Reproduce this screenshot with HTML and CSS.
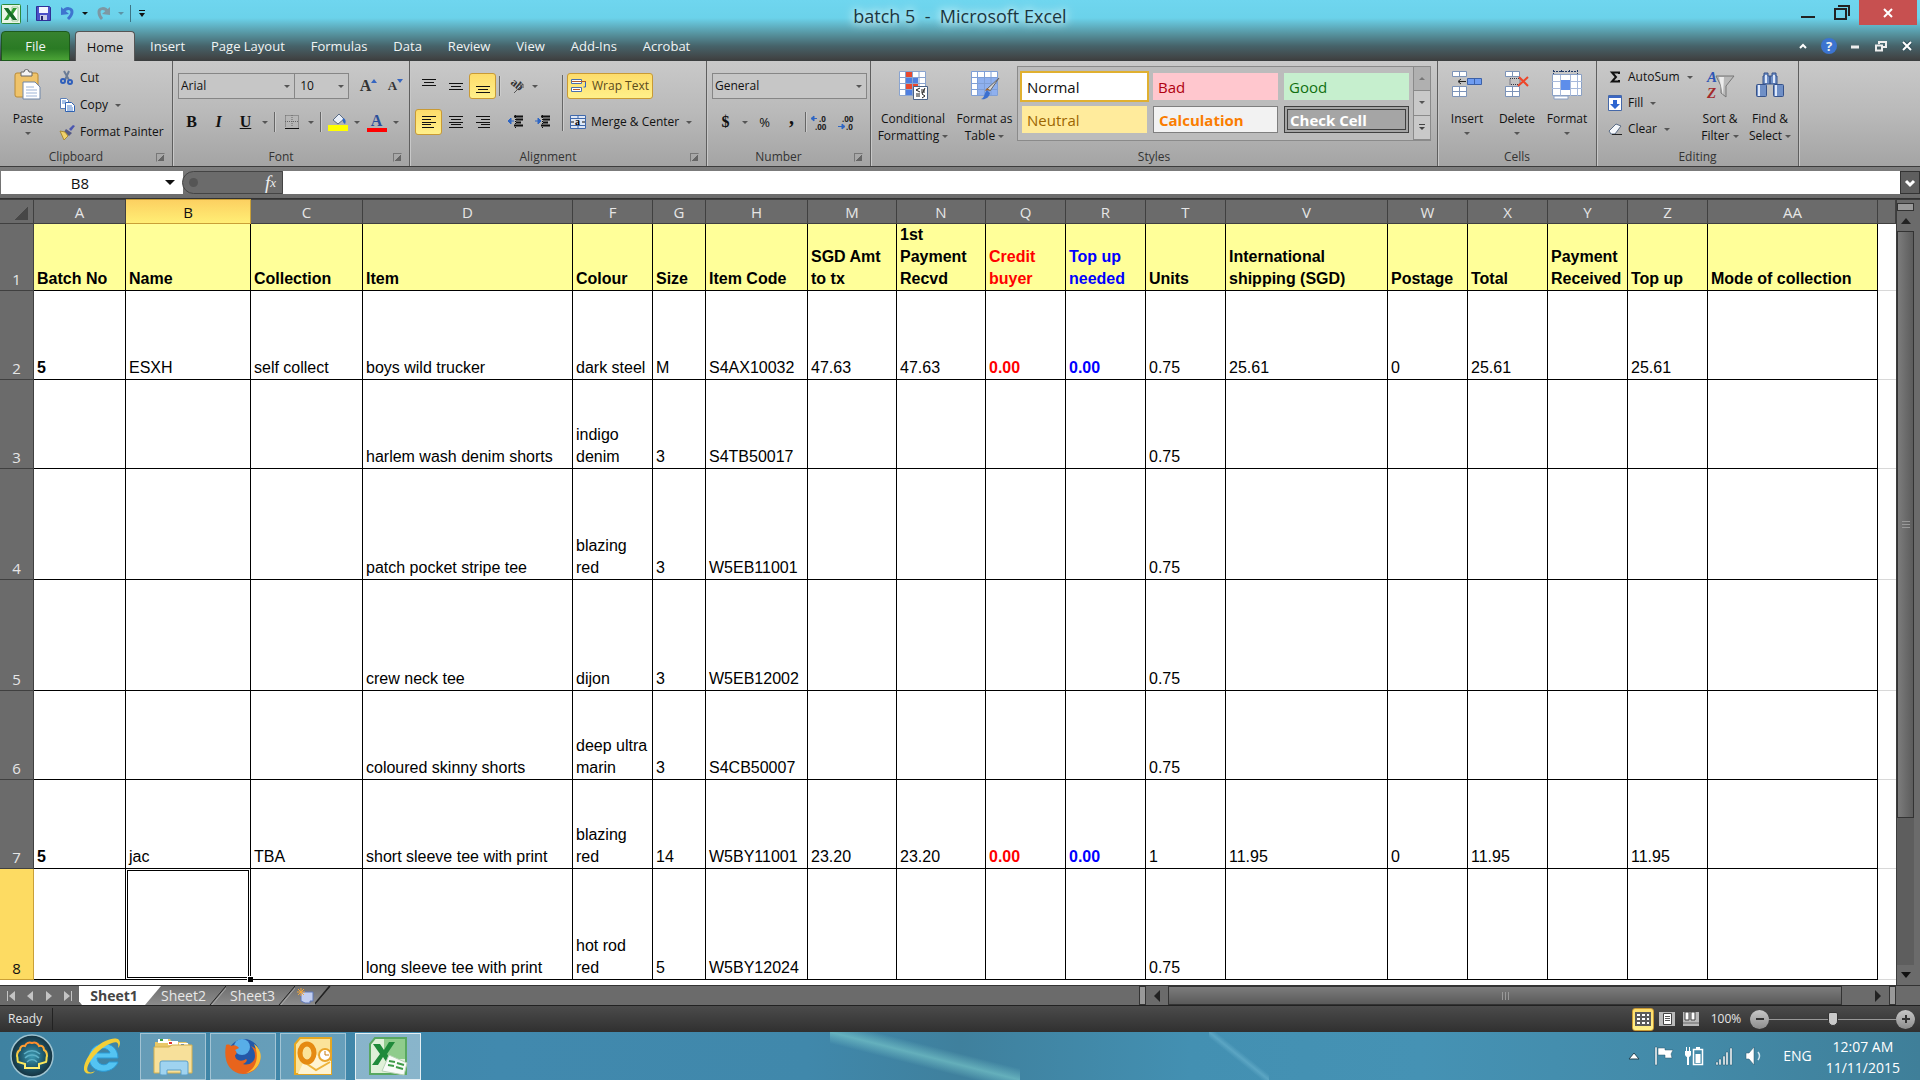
FILE: index.html
```html
<!DOCTYPE html>
<html lang="en">
<head>
<meta charset="utf-8">
<title>batch 5 - Microsoft Excel</title>
<link rel="stylesheet" href="styles.css">
</head>
<body>
<header class="chrome">
  <div class="titlebar">
    <div class="quick">
      <svg width="20" height="20" viewBox="0 0 20 20"><rect x=".5" y=".5" width="19" height="19" rx="1" fill="#e9f5e6" stroke="#2c8a3c"/><path d="M11 3h6v14h-6z" fill="#fff" stroke="#9cc79a"/><path d="M3 4h4l3 4 2-4h4l-4 6 4 6h-4l-3-4-2 4H3l4-6z" fill="#2f9a32"/><path d="M3 4h4l9 12h-4z" fill="#196b2a"/></svg>
      <i class="tick"></i>
      <button class="ico" aria-label="Save"><svg width="15" height="15" viewBox="0 0 15 15"><path d="M.5.5h13l1 1v13H.5z" fill="#4b50c8" stroke="#2f2f96"/><path d="M3 1h9v6H3z" fill="#f4f6ff"/><path d="M4 9h7v5H4z" fill="#c9cde8"/><path d="M5 10h2v4H5z" fill="#26266e"/></svg></button>
      <button class="ico" aria-label="Undo"><svg width="15" height="15" viewBox="0 0 15 15"><path d="M3 6c3-5 9-4 9 0 0 3-2 5-4 7" fill="none" stroke="#3e74cf" stroke-width="3"/><path d="M1 1l0 8 8-1z" fill="#3e74cf"/></svg></button>
      <i class="caret dark"></i>
      <button class="ico" aria-label="Redo"><svg width="15" height="15" viewBox="0 0 15 15"><path d="M12 6C9 1 3 2 3 6c0 3 1 5 3 7" fill="none" stroke="#7d98a3" stroke-width="3"/><path d="M14 1l0 8-8-1z" fill="#7d98a3"/></svg></button>
      <i class="caret pale"></i>
      <i class="tick"></i>
      <button class="ico" aria-label="Customize Quick Access Toolbar"><svg width="8" height="7" viewBox="0 0 8 7"><path d="M1 .500h6" stroke="#111"/><path d="M1 3h6L4 7z" fill="#111"/></svg></button>
    </div>
    <h1>batch 5 &nbsp;- &nbsp;Microsoft Excel</h1>
    <div class="winctl">
      <button aria-label="Minimize"><svg width="16" height="16" viewBox="0 0 16 16"><path d="M1 12h14" stroke="#222" stroke-width="2"/></svg></button>
      <button aria-label="Restore Down"><svg width="16" height="16" viewBox="0 0 16 16"><path d="M1 4h11v10H1zM4 1h11v10" fill="none" stroke="#222" stroke-width="2"/></svg></button>
      <button class="close" aria-label="Close"><svg width="12" height="12" viewBox="0 0 12 12"><path d="M2 2l8 8M10 2l-8 8" stroke="#fff" stroke-width="2"/></svg></button>
    </div>
  </div>
  <nav class="tabs">
    <button class="file">File</button>
    <button class="on">Home</button>
    <button>Insert</button><button>Page Layout</button><button>Formulas</button><button>Data</button><button>Review</button><button>View</button><button>Add-Ins</button><button>Acrobat</button>
    <div class="docctl">
      <button aria-label="Minimize the Ribbon"><svg width="12" height="12" viewBox="0 0 12 12"><path d="M3 8l3-3 3 3" fill="none" stroke="#fff" stroke-width="2"/></svg></button>
      <button class="help" aria-label="Help">?</button>
      <button aria-label="Minimize window"><svg width="12" height="12" viewBox="0 0 12 12"><path d="M2 7h8" stroke="#eee" stroke-width="3"/></svg></button>
      <button aria-label="Restore window"><svg width="12" height="12" viewBox="0 0 12 12"><path d="M4 4V2h7v5H8M1 5.500h6v5H1z" fill="none" stroke="#eee" stroke-width="2"/></svg></button>
      <button aria-label="Close window"><svg width="12" height="12" viewBox="0 0 12 12"><path d="M2 2l8 8M10 2l-8 8" stroke="#33525c" stroke-width="4"/><path d="M2 2l8 8M10 2l-8 8" stroke="#fff" stroke-width="2"/></svg></button>
    </div>
  </nav>
</header>

<section class="ribbon">
  <div class="group clipboard">
    <div class="body">
      <button class="big"><svg width="28" height="30" viewBox="0 0 28 30"><rect x="1" y="3" width="23" height="24" rx="2" fill="#efc36a" stroke="#b98a35"/><path d="M7 2h3a2 2 0 0 1 5 0h3v4H7z" fill="#f4f4f4" stroke="#666"/><path d="M9 12h12l5 5v12H9z" fill="#fff" stroke="#6f86a8"/><path d="M12 17h8M12 20h11M12 23h11M12 26h11" stroke="#9db4d6"/></svg><span>Paste</span><i class="caret"></i></button>
      <div class="stack">
        <button class="small"><svg width="16" height="16" viewBox="0 0 16 16"><path d="M5 1l5 9M10 1L6 10" stroke="#6a7c96" stroke-width="2"/><circle cx="4" cy="11" r="2" fill="none" stroke="#2f5fbb" stroke-width="2"/><circle cx="11" cy="12" r="2" fill="none" stroke="#2f5fbb" stroke-width="2"/></svg>Cut</button>
        <button class="small"><svg width="16" height="16" viewBox="0 0 16 16"><path d="M1.500 1.500h6l2 2v8h-8z" fill="#fff" stroke="#5b7fb8"/><path d="M6.500 5.500h6l3 3v6h-9z" fill="#fff" stroke="#2f62b2"/><path d="M3 4h4M3 6h3M8 9h5M8 11h6M8 13h6" stroke="#4f83cf"/></svg>Copy <i class="caret"></i></button>
        <button class="small"><svg width="16" height="16" viewBox="0 0 16 16"><path d="M10 5l4-4 2 1-4 5z" fill="#4a56b0"/><path d="M7 5l6 4-3 3-5-4z" fill="#555a86"/><path d="M1 7l5 1 3 4-4 4z" fill="#f1d26b" stroke="#a98a35"/></svg>Format Painter</button>
      </div>
    </div>
    <div class="foot"><span>Clipboard</span><button class="launch" aria-label="Clipboard options"></button></div>
  </div>

  <div class="group font">
    <div class="rows">
      <div class="row">
        <label class="combo face"><select aria-label="Font"><option>Arial</option></select></label><label class="combo size"><select aria-label="Font Size"><option>10</option></select></label>
        <button class="tool serif big-a" aria-label="Grow Font">A<svg width="6" height="4" viewBox="0 0 6 4"><path d="M0 4l3-4 3 4z" fill="#3565c0"/></svg></button>
        <button class="tool serif small-a" aria-label="Shrink Font">A<svg width="6" height="4" viewBox="0 0 6 4"><path d="M0 0l3 4 3-4z" fill="#3565c0"/></svg></button>
      </div>
      <div class="row">
        <button class="tool serif">B</button><button class="tool serif it">I</button><button class="tool serif un">U</button><i class="caret"></i><i class="vr"></i>
        <button class="tool" aria-label="Borders"><svg width="14" height="14" viewBox="0 0 14 14"><path d="M.5.5h13v12M.5.500v12M7 0v12M0 6.500h14" fill="none" stroke="#666" stroke-dasharray="1 1"/><path d="M0 13.500h14" stroke="#111"/></svg></button><i class="caret"></i><i class="vr"></i>
        <button class="tool" aria-label="Fill Color"><svg width="20" height="18" viewBox="0 0 20 18"><path d="M5 7l6-6 5 5-6 5z" fill="#e9eff8" stroke="#5a6c86"/><path d="M15 5c3 1 3 4 2 6-2-1-3-4-2-6z" fill="#2f66c4"/><path d="M0 12h20v6H0z" fill="#ff0"/></svg></button><i class="caret"></i>
        <button class="tool" aria-label="Font Color"><span class="serif fc">A</span></button><i class="caret"></i>
      </div>
    </div>
    <div class="foot"><span>Font</span><button class="launch" aria-label="Font options"></button></div>
  </div>

  <div class="group align">
    <div class="body">
      <div class="rows">
        <div class="row">
          <button class="tool" aria-label="Top Align"><svg width="14" height="18" viewBox="0 0 14 18"><path d="M0 2.500h14M2 5.500h10M0 8.500h14" stroke="#111"/></svg></button>
          <button class="tool" aria-label="Middle Align"><svg width="14" height="18" viewBox="0 0 14 18"><path d="M0 6.500h14M2 9.500h10M0 12.500h14" stroke="#111"/></svg></button>
          <button class="tool hot" aria-label="Bottom Align"><svg width="14" height="18" viewBox="0 0 14 18"><path d="M0 9.500h14M2 12.500h10M0 15.500h14" stroke="#111"/></svg></button><i class="vr"></i>
          <button class="tool" aria-label="Orientation"><svg width="16" height="16" viewBox="0 0 16 16"><text x="0" y="8" font-size="12" font-weight="700" transform="rotate(40 4 8)" fill="#333">ab</text><path d="M5 15l9-9M10 6h4v4" fill="none" stroke="#555"/></svg></button><i class="caret"></i>
        </div>
        <div class="row">
          <button class="tool hot" aria-label="Align Text Left"><svg width="14" height="12" viewBox="0 0 14 12"><path d="M0 .500h14M0 3.500h9M0 6.500h14M0 8.500h9M0 11.500h12" stroke="#111"/></svg></button>
          <button class="tool" aria-label="Center"><svg width="14" height="12" viewBox="0 0 14 12"><path d="M0 .500h14M2 3.500h10M0 6.500h14M2 8.500h10M0 11.500h14" stroke="#111"/></svg></button>
          <button class="tool" aria-label="Align Text Right"><svg width="14" height="12" viewBox="0 0 14 12"><path d="M0 .500h14M5 3.500h9M0 6.500h14M5 8.500h9M2 11.500h12" stroke="#111"/></svg></button><i class="vr"></i>
          <button class="tool" aria-label="Decrease Indent"><svg width="16" height="14" viewBox="0 0 16 14"><path d="M6 1.500h9M8 4.500h7M8 7.500h5M6 10.500h9" stroke="#111" stroke-width="2"/><path d="M7.500 0v14" stroke="#111" stroke-dasharray="1 1"/><path d="M6 6H1m2-3L0 6l3 3z" stroke="#2f66c4" fill="#2f66c4"/></svg></button>
          <button class="tool" aria-label="Increase Indent"><svg width="16" height="14" viewBox="0 0 16 14"><path d="M6 1.500h9M8 4.500h7M8 7.500h5M6 10.500h9" stroke="#111" stroke-width="2"/><path d="M7.500 0v14" stroke="#111" stroke-dasharray="1 1"/><path d="M0 6h4M3 3l3 3-3 3z" stroke="#2f66c4" fill="#2f66c4"/></svg></button>
        </div>
      </div>
      <i class="vr tall"></i>
      <div class="rows wrapcol">
        <div class="row"><button class="small hot"><svg width="16" height="16" viewBox="0 0 16 16"><path d="M.5 1.500h10v4H.5zM.5 9.500h10v4H.5z" fill="#fff" stroke="#4a6fae"/><path d="M1 3.500h14M2 11.500h7" stroke="#b25a2a"/><path d="M14.500 4v5h-2" fill="none" stroke="#2f66c4"/></svg>Wrap Text</button></div>
        <div class="row"><button class="small"><svg width="16" height="14" viewBox="0 0 16 14"><path d="M.5.500h15v13H.5z" fill="#dfe8f6" stroke="#3f68ab"/><path d="M8 0v4M8 10v4M0 3.500h16M0 10.500h16" stroke="#3f68ab"/><path d="M1 7h3M12 7h3" stroke="#111"/><text x="5" y="10" font-size="10" font-weight="700">a</text></svg>Merge &amp; Center <i class="caret"></i></button></div>
      </div>
    </div>
    <div class="foot"><span>Alignment</span><button class="launch" aria-label="Alignment options"></button></div>
  </div>

  <div class="group number">
    <div class="rows">
      <div class="row"><label class="combo fmt"><select aria-label="Number Format"><option>General</option></select></label></div>
      <div class="row">
        <button class="tool serif">$</button><i class="caret"></i><button class="tool pct">%</button><button class="tool serif comma">,</button><i class="vr"></i>
        <button class="tool" aria-label="Increase Decimal"><svg width="17" height="15" viewBox="0 0 17 15"><text x="8" y="7" class="dec">.0</text><text x="4" y="15" class="dec">.00</text><path d="M1 3.500h5M3 1L0 3.500 3 6z" stroke="#2f66c4" fill="#2f66c4"/></svg></button>
        <button class="tool" aria-label="Decrease Decimal"><svg width="17" height="15" viewBox="0 0 17 15"><text x="4" y="7" class="dec">.00</text><text x="8" y="15" class="dec">.0</text><path d="M0 11.500h5M4 9l3 2.500L4 14z" stroke="#2f66c4" fill="#2f66c4"/></svg></button>
      </div>
    </div>
    <div class="foot"><span>Number</span><button class="launch" aria-label="Number options"></button></div>
  </div>

  <div class="group styles">
    <div class="body">
      <button class="big cf"><svg width="30" height="30" viewBox="0 0 30 30"><path d="M1.500 1.500h26v24h-26z" fill="#fff"/><path d="M8 1h6v6H8zM8 13h12v6H8z" fill="#e8492f"/><path d="M8 7h12v6H8zM8 19h6v6H8z" fill="#4f7fe0"/><path d="M1.500 1.500h26v24h-26zM7.500 1v24M14.500 1v24M21 1v24M1 7.500h26M1 13.500h26M1 19.500h26" fill="none" stroke="#8aa4cf"/><path d="M15.500 16.500h14v13h-14z" fill="#fff" stroke="#4a6286"/><path d="M22 18l-4 2 4 2M18 24h4M18 26h4M23 20h4M23 22h4M24 24l3 2-3 2M27 18l-3 6" fill="none" stroke="#222"/></svg><span>Conditional<br>Formatting <i class="caret"></i></span></button>
      <button class="big ft"><svg width="30" height="30" viewBox="0 0 30 30"><path d="M1.500 1.500h26v24h-26z" fill="#fff"/><path d="M8 7h20v18H8z" fill="#8fb0ee"/><path d="M1.500 1.500h26v24h-26zM7.500 1v24M14.500 1v24M21 1v24M1 7.500h26M1 13.500h26M1 19.500h26" fill="none" stroke="#7f9fd6"/><path d="M29 8l-9 13-3-2z" fill="#d8d8d8" stroke="#666"/><path d="M20 20l-3-2-2 3z" fill="#a0622a"/><path d="M11 29c4-1 3-6 6-9l3 3c-1 5-5 7-9 6z" fill="#3a6fd0"/></svg><span>Format as<br>Table <i class="caret"></i></span></button>
      <div class="gallery">
        <div class="swatches">
          <button class="sw normal">Normal</button><button class="sw bad">Bad</button><button class="sw good">Good</button>
          <button class="sw neutral">Neutral</button><button class="sw calc">Calculation</button><button class="sw check">Check Cell</button>
        </div>
        <div class="spin">
          <button class="off" aria-label="Row up"><i class="caret up"></i></button>
          <button aria-label="Row down"><i class="caret"></i></button>
          <button aria-label="More styles"><svg width="8" height="7" viewBox="0 0 8 7"><path d="M1 .500h6" stroke="#444"/><path d="M1 3h6L4 6z" fill="#444"/></svg></button>
        </div>
      </div>
    </div>
    <div class="foot"><span>Styles</span></div>
  </div>

  <div class="group cells">
    <div class="body">
      <button class="big"><svg width="30" height="30" viewBox="0 0 30 30"><path d="M.5 1.500h14v5H.5zM.5 16.500h14v10H.5zM7.500 1v6M7.500 16v11M0 21.500h15" fill="#fff" stroke="#7c93b8"/><path d="M15.500 8.500h14v6h-14zM22.500 8v7" fill="#6f9cf0" stroke="#3c61a8"/><path d="M14 11.500H7M9 9l-3 2.500L9 14" fill="none" stroke="#222"/></svg><span>Insert</span><i class="caret"></i></button>
      <button class="big"><svg width="30" height="30" viewBox="0 0 30 30"><path d="M3.500 1.500h14v5h-14zM3.500 16.500h14v10h-14zM10.500 1v6M10.500 16v11M3 21.500h15" fill="#fff" stroke="#7c93b8"/><path d="M8 8.500h10v6H8z" fill="none" stroke="#334" stroke-dasharray="1 1"/><path d="M17 7l9 9M26 7l-10 9" stroke="#ee4528" stroke-width="2"/></svg><span>Delete</span><i class="caret"></i></button>
      <button class="big"><svg width="30" height="30" viewBox="0 0 30 30"><path d="M.5 4.500h29v21H.5z" fill="#fff" stroke="#8aa0c4"/><path d="M0 11.500h30M0 18.500h30M8.500 5v24M18.500 5v21M25.500 5v21" stroke="#a8badb"/><path d="M9 10h9v10H9z" fill="#5d8eea"/><path d="M1 1.500h24M1.500 0v4M9.500 0v3M17.500 0v3M25.500 0v4" stroke="#223a66" fill="none" stroke-dasharray="2 1"/><path d="M2 26h14v3H2z" fill="#fff" stroke="#8aa0c4"/></svg><span>Format</span><i class="caret"></i></button>
    </div>
    <div class="foot"><span>Cells</span></div>
  </div>

  <div class="group editing">
    <div class="body">
      <div class="stack">
        <button class="small"><svg width="14" height="16" viewBox="0 0 14 16"><path d="M11 5V3.500H4l4 4.500-4 4.500h7V11" fill="none" stroke="#111" stroke-width="2"/></svg>AutoSum <i class="caret"></i></button>
        <button class="small"><svg width="14" height="16" viewBox="0 0 14 16"><path d="M.5.500h13v15H.5z" fill="#fff" stroke="#4568a8"/><path d="M1 1h12v2H1z" fill="#3c67c4"/><path d="M5 5h4v4h3l-5 5-5-5h3z" fill="#2f66d0"/></svg>Fill <i class="caret"></i></button>
        <button class="small"><svg width="14" height="16" viewBox="0 0 14 16"><path d="M1 10l7-7 5 2-6 8H3z" fill="#f4f7fb" stroke="#5a6c86"/><path d="M4 13.500h10" stroke="#222"/></svg>Clear <i class="caret"></i></button>
      </div>
      <button class="big"><svg width="30" height="30" viewBox="0 0 30 30"><text x="2" y="12" class="az" fill="#2f55b5">A</text><text x="2" y="28" class="az" fill="#a32a2a">Z</text><path d="M11 6h18l-8 10v11l-5-4v-7z" fill="#b9b9b9" stroke="#777"/><path d="M14 7h5l-1 18" fill="#ececec"/></svg><span>Sort &amp;<br>Filter <i class="caret"></i></span></button>
      <button class="big"><svg width="30" height="30" viewBox="0 0 30 30"><g fill="#6f8fc6" stroke="#36528a"><path d="M9 3h4v3h2v8H8V6h1zM17 3h4v3h1v8h-7V6h2z"/><rect x="1.500" y="14.500" width="10" height="12" rx="1"/><rect x="18.500" y="14.500" width="10" height="12" rx="1"/></g><path d="M4 15v11M21 15v11M11 5v8M19 5v8" stroke="#dfe9fa" stroke-width="2"/></svg><span>Find &amp;<br>Select <i class="caret"></i></span></button>
    </div>
    <div class="foot"><span>Editing</span></div>
  </div>
</section>

<section class="formula">
  <label class="namebox"><input aria-label="Name Box" value="B8"><i class="caret dark"></i></label>
  <div class="fx"><i class="knob"></i><button class="serif">f<sub>x</sub></button></div>
  <input class="fbar" aria-label="Formula Bar">
  <button class="expand" aria-label="Expand Formula Bar"><svg width="10" height="8" viewBox="0 0 10 8"><path d="M1 2l4 4 4-4" fill="none" stroke="#fff" stroke-width="3"/></svg></button>
</section>

<main class="sheet">
  <div class="gridwrap">
  <table>
    <colgroup><col class="w34"><col class="w92"><col class="w125"><col class="w112"><col class="w210"><col class="w80"><col class="w53"><col class="w102"><col class="w89"><col class="w89"><col class="w80"><col class="w80"><col class="w80"><col class="w162"><col class="w80"><col class="w80"><col class="w80"><col class="w80"><col class="w170"><col></colgroup>
    <thead><tr><th class="corner"></th><th>A</th><th class="sel">B</th><th>C</th><th>D</th><th>F</th><th>G</th><th>H</th><th>M</th><th>N</th><th>Q</th><th>R</th><th>T</th><th>V</th><th>W</th><th>X</th><th>Y</th><th>Z</th><th>AA</th><th></th></tr></thead>
    <tbody>
      <tr class="r1"><th>1</th><td>Batch No</td><td>Name</td><td>Collection</td><td>Item</td><td>Colour</td><td>Size</td><td>Item Code</td><td>SGD Amt to tx</td><td>1st Payment Recvd</td><td class="red">Credit buyer</td><td class="blue">Top up needed</td><td>Units</td><td>International shipping (SGD)</td><td>Postage</td><td>Total</td><td>Payment Received</td><td>Top up</td><td>Mode of collection</td><td></td></tr>
      <tr class="mid"><th>2</th><td><b>5</b></td><td>ESXH</td><td>self collect</td><td>boys wild trucker</td><td>dark steel</td><td>M</td><td>S4AX10032</td><td>47.63</td><td>47.63</td><td class="red">0.00</td><td class="blue">0.00</td><td>0.75</td><td>25.61</td><td>0</td><td>25.61</td><td></td><td>25.61</td><td></td><td></td></tr>
      <tr class="mid"><th>3</th><td></td><td></td><td></td><td>harlem wash denim shorts</td><td>indigo denim</td><td>3</td><td>S4TB50017</td><td></td><td></td><td></td><td></td><td>0.75</td><td></td><td></td><td></td><td></td><td></td><td></td><td></td></tr>
      <tr class="high"><th>4</th><td></td><td></td><td></td><td>patch pocket stripe tee</td><td>blazing red</td><td>3</td><td>W5EB11001</td><td></td><td></td><td></td><td></td><td>0.75</td><td></td><td></td><td></td><td></td><td></td><td></td><td></td></tr>
      <tr class="high"><th>5</th><td></td><td></td><td></td><td>crew neck tee</td><td>dijon</td><td>3</td><td>W5EB12002</td><td></td><td></td><td></td><td></td><td>0.75</td><td></td><td></td><td></td><td></td><td></td><td></td><td></td></tr>
      <tr class="mid"><th>6</th><td></td><td></td><td></td><td>coloured skinny shorts</td><td>deep ultra marin</td><td>3</td><td>S4CB50007</td><td></td><td></td><td></td><td></td><td>0.75</td><td></td><td></td><td></td><td></td><td></td><td></td><td></td></tr>
      <tr class="mid"><th>7</th><td><b>5</b></td><td>jac</td><td>TBA</td><td>short sleeve tee with print</td><td>blazing red</td><td>14</td><td>W5BY11001</td><td>23.20</td><td>23.20</td><td class="red">0.00</td><td class="blue">0.00</td><td>1</td><td>11.95</td><td>0</td><td>11.95</td><td></td><td>11.95</td><td></td><td></td></tr>
      <tr class="high"><th class="sel">8</th><td></td><td class="cursor"></td><td></td><td>long sleeve tee with print</td><td>hot rod red</td><td>5</td><td>W5BY12024</td><td></td><td></td><td></td><td></td><td>0.75</td><td></td><td></td><td></td><td></td><td></td><td></td><td></td></tr>
    </tbody>
  </table>
  </div>
  <div class="vscroll">
    <i class="split"></i>
    <button aria-label="Scroll up"><i class="caret up dark"></i></button>
    <div class="track"><div class="thumb"><svg width="8" height="7" viewBox="0 0 8 7"><path d="M0 .500h8M0 3.500h8M0 6.500h8" stroke="#999"/></svg></div></div>
    <button aria-label="Scroll down"><i class="caret dark"></i></button>
  </div>
</main>

<div class="sheetbar">
  <div class="navs">
    <button aria-label="First sheet"><svg width="10" height="10" viewBox="0 0 10 10"><path d="M1 0h1v10H1zM9 0v10L3 5z" fill="#c4c4c4"/></svg></button>
    <button aria-label="Previous sheet"><svg width="10" height="10" viewBox="0 0 10 10"><path d="M8 0v10L2 5z" fill="#c4c4c4"/></svg></button>
    <button aria-label="Next sheet"><svg width="10" height="10" viewBox="0 0 10 10"><path d="M2 0v10l6-5z" fill="#c4c4c4"/></svg></button>
    <button aria-label="Last sheet"><svg width="10" height="10" viewBox="0 0 10 10"><path d="M8 0h1v10H8zM1 0v10l6-5z" fill="#c4c4c4"/></svg></button>
  </div>
  <button class="stab active">Sheet1</button>
  <button class="stab first">Sheet2</button>
  <svg class="slash" width="16" height="19" viewBox="0 0 16 19"><path d="M0 19L16 0" stroke="#222"/><path d="M2 19L17 1" stroke="#aaa"/></svg>
  <button class="stab">Sheet3</button>
  <svg class="slash" width="16" height="19" viewBox="0 0 16 19"><path d="M0 19L16 0" stroke="#222"/><path d="M2 19L17 1" stroke="#aaa"/></svg>
  <button class="newtab" aria-label="Insert Worksheet"><svg width="17" height="16" viewBox="0 0 17 16"><path d="M4 4h12v9h-3v2H8l-4-2z" fill="#c3cff0" stroke="#5f78b8"/><path d="M4 0v8M0 4h8M1 1l6 6M7 1L1 7" stroke="#f0a63c"/></svg></button>
  <svg class="slash end" width="16" height="19" viewBox="0 0 16 19"><path d="M0 18L15 0" stroke="#222" stroke-width="2"/></svg>
  <div class="hscroll">
    <i class="split v"></i>
    <button aria-label="Scroll left"><svg width="8" height="12" viewBox="0 0 8 12"><path d="M7 0v12L1 6z" fill="#222"/></svg></button>
    <div class="htrack"><div class="hthumb"><svg width="7" height="8" viewBox="0 0 7 8"><path d="M.5 0v8M3.500 0v8M6.500 0v8" stroke="#999"/></svg></div></div>
    <button aria-label="Scroll right"><svg width="8" height="12" viewBox="0 0 8 12"><path d="M1 0v12l6-6z" fill="#222"/></svg></button>
    <i class="split v"></i>
  </div>
</div>

<footer class="status">
  <span class="ready">Ready</span>
  <div class="views">
    <button class="hot" aria-label="Normal"><svg width="16" height="14" viewBox="0 0 16 14"><path d="M0 0h16v14H0z" fill="#5b5b5b"/><path d="M2 2h3v2H2zM7 2h3v2H7zM12 2h2v2h-2zM2 6h3v2H2zM7 6h3v2H7zM12 6h2v2h-2zM2 10h3v2H2zM7 10h3v2H7zM12 10h2v2h-2z" fill="#fff"/></svg></button>
    <button aria-label="Page Layout"><svg width="16" height="14" viewBox="0 0 16 14"><path d="M0 0h16v14H0z" fill="#b9b9b9"/><path d="M4.500 1.500h8v11h-8z" fill="#fff" stroke="#444"/><path d="M6 4.500h5M6 6.500h5M6 8.500h5" stroke="#555"/></svg></button>
    <button aria-label="Page Break Preview"><svg width="16" height="14" viewBox="0 0 16 14"><path d="M0 0h16v14H0z" fill="#b9b9b9"/><path d="M2 0h4v8H2zM8 0h4v8H8z" fill="#fff" stroke="#444"/><path d="M0 11h16" stroke="#666"/></svg></button>
  </div>
  <button class="zoomtxt">100%</button>
  <button class="round" aria-label="Zoom Out"><svg width="10" height="10" viewBox="0 0 10 10"><path d="M1 5h8" stroke="#333" stroke-width="2"/></svg></button>
  <input type="range" aria-label="Zoom" min="0" max="100" value="50">
  <button class="round" aria-label="Zoom In"><svg width="10" height="10" viewBox="0 0 10 10"><path d="M1 5h8M5 1v8" stroke="#333" stroke-width="2"/></svg></button>
</footer>

<div class="taskbar">
  <button class="start" aria-label="Start"><svg width="44" height="44" viewBox="0 0 44 44"><defs><radialGradient id="orb"><stop offset="0" stop-color="#3d9bb4"/><stop offset=".6" stop-color="#1d5468"/><stop offset="1" stop-color="#16323f"/></radialGradient><linearGradient id="shell" x2="0" y2="1"><stop offset="0" stop-color="#ff8a2a"/><stop offset=".6" stop-color="#f6e04a"/><stop offset="1" stop-color="#ffef70"/></linearGradient></defs><circle cx="22" cy="22" r="21" fill="url(#orb)" stroke="#9ec3d0" stroke-width="1.500"/><path d="M15 34v-4l-7-2c-1-2 0-4-1-6 0-3 1-5 3-6 0-3 2-5 5-4 1-3 4-4 7-3 3-1 6 0 7 3 3-1 5 1 5 4 2 1 3 3 3 6-1 2 0 4-1 6l-7 2v4z" fill="none" stroke="url(#shell)" stroke-width="2"/><path d="M14 20c5-4 11-4 16 0M15 24c4-4 10-4 14 0M17 28c3-3 7-3 10 0" fill="none" stroke="#5eb0c6" stroke-width="1.500"/></svg></button>
  <button class="task ie" aria-label="Internet Explorer"><svg width="38" height="38" viewBox="0 0 38 38"><path d="M35 21H14c0 7 9 9 12 4h9C30 38 7 38 6 21 6 3 35 1 35 21zM14 16h13c-1-6-12-6-13 0z" fill="#54c4f2" stroke="#2a9bd6"/><path d="M10 36C-5 40 1 22 12 11 23 1 37-2 37 6c0 2-1 4-2 5 1-4 0-7-6-5C15 10-1 32 6 35c2 1 4 0 6-1z" fill="#f3cf38"/></svg></button>
  <button class="task open" aria-label="File Explorer"><svg width="42" height="42" viewBox="0 0 42 42"><path d="M3 7h3V4h12l2 3h14l5 4v26H3z" fill="#e9c867"/><path d="M6 4h10v4H6zM16 6h10v4H16zM27 8h9v4h-9z" fill="#fff"/><path d="M8 4h3v2H8z" fill="#3a9d3a"/><path d="M17 7h3v2h-3z" fill="#d33"/><path d="M29 9h3v2h-3z" fill="#37c"/><path d="M2 12h15l3-2h20v28H2z" fill="#f7e09a" stroke="#d4b04e"/><path d="M8 39V28q0-2 2-2h24q2 0 2 2v11q0 1-2 1H29v-5H15v5h-5q-2 0-2-1z" fill="#9fd3f0" stroke="#5c9fc8"/></svg></button>
  <button class="task open" aria-label="Firefox"><svg width="38" height="38" viewBox="0 0 38 38"><circle cx="20" cy="18" r="16" fill="#2458a8"/><circle cx="18" cy="10" r="8" fill="#58aee8"/><path d="M2 8c3-1 4 0 5 1 3-2 7 0 8 2l-4 2c2 2 2 4 0 5 0 6 7 7 11 4 2 1 0 4-3 5 6 2 12-2 12-8 0-5-2-8-4-10 7 3 10 8 9 15-2 8-9 13-17 13C5 36-1 24 2 8z" fill="#e8641c"/><path d="M30 7c6 4 8 11 6 17-2 7-8 11-14 12 10-4 14-16 8-29z" fill="#fcbf35"/></svg></button>
  <button class="task open" aria-label="Outlook"><svg width="38" height="38" viewBox="0 0 38 38"><path d="M6 1h31v36H1V7z" fill="#fbe39a" stroke="#e5a722" stroke-width="2"/><path d="M10 24l12-6 15 6v13H4z" fill="#fff4d2"/><path d="M10 25l12 8 14-8" fill="none" stroke="#edb43c" stroke-width="2"/><ellipse cx="13" cy="16" rx="7" ry="9" fill="none" stroke="#e58a12" stroke-width="5"/><circle cx="31" cy="18" r="6" fill="#fff" stroke="#e9a52c" stroke-width="2"/><path d="M31 14v4h4" fill="none" stroke="#c77a10"/></svg></button>
  <button class="task open current" aria-label="Excel"><svg width="38" height="38" viewBox="0 0 38 38"><path d="M6 1h31v36H1V7z" fill="#dff0d8" stroke="#58a860" stroke-width="2"/><path d="M15 2h21v20H15z" fill="#8fcc8c"/><path d="M4 7h7l4 6 5-8h6l-8 12 7 9h-7l-4-6-5 8H3l8-11z" fill="#1f8a3a"/><path d="M20 18l18 8-3 12-22-4z" fill="#f7fbf7" stroke="#b7d3b5"/><path d="M20 24l6 1M28 26l7 2M19 28l6 1M27 30l7 2" stroke="#3e9a48" stroke-width="2"/></svg></button>
  <div class="tray">
    <button aria-label="Show hidden icons"><svg width="10" height="8" viewBox="0 0 10 8"><path d="M0 7l5-6 5 6z" fill="#fff" stroke="#245"/></svg></button>
    <button aria-label="Action Center"><svg width="20" height="20" viewBox="0 0 20 20"><path d="M1 1h2v18H1zM4 2h7v2h8l-2 4 1 4h-7V9H4z" fill="#fff" stroke="#2b5568" stroke-width=".500"/></svg></button>
    <button aria-label="Battery"><svg width="20" height="20" viewBox="0 0 20 20"><path d="M9.500 3.500h9v15h-9z" fill="none" stroke="#fff" stroke-width="1.500"/><path d="M12 1h4v2h-4zM11.500 8h5v9h-5z" fill="#fff"/><path d="M2 1h1v4H2zM5 1h1v4H5zM1 5h6v4q-1 2-2 2v8H3v-8q-1 0-2-2z" fill="#fff"/></svg></button>
    <button aria-label="Network"><svg width="18" height="18" viewBox="0 0 18 18"><path d="M1 15h2v3H1zM4 12h2v6H4zM8 9h2v9H8zM11 5h2v13h-2zM15 1h2v17h-2z" fill="#fff" stroke="#2b5568" stroke-width=".500"/></svg></button>
    <button aria-label="Volume"><svg width="20" height="20" viewBox="0 0 20 20"><path d="M2 7h3l5-6v18l-5-6H2z" fill="#fff" stroke="#2b5568" stroke-width=".500"/><path d="M14 6q3 4 0 8" fill="none" stroke="#cfe4ee" stroke-width="1.500"/></svg></button>
    <span class="lang">ENG</span>
    <time><span>12:07 AM</span><span>11/11/2015</span></time>
  </div>
</div>
</body>
</html>
```

FILE: styles.css
```css
* { box-sizing: border-box; }
body {
  margin: 0;
  height: 100vh;
  display: flex;
  flex-direction: column;
  overflow: hidden;
  background: #6b6b6b;
  font: 12px/16px "Open Sans", "Noto Sans", sans-serif;
  color: #111;
}
button {
  border: 0;
  padding: 0;
  background: none;
  font: inherit;
  color: inherit;
  display: flex;
  align-items: center;
  justify-content: center;
  flex: none;
}
svg { display: block; flex: none; overflow: visible; }
svg text { font-family: "Liberation Serif", serif; }
svg .dec { font: 700 8px "Open Sans", sans-serif; fill: #222; }
svg .az { font-size: 15px; font-weight: 700; font-style: italic; }
.serif { font-family: "Liberation Serif", serif; font-weight: 700; }

.caret {
  display: inline-block;
  border: 3px solid transparent;
  border-top: 3px solid #555;
  border-bottom: 0;
  flex: none;
  vertical-align: middle;
}
.caret.up { border-top: 0; border-bottom: 3px solid #777; }
.caret.dark { border-top-color: #111; }
.caret.up.dark { border-bottom-color: #222; }
.caret.pale { border-top-color: #5b93a6; }

/* title bar and tabs */
.chrome {
  background: linear-gradient(#6fd6ef 0, #6bd2ea 18px, #56939f 34px, #46636a 46px, #414546 58px, #3a3d3e 61px);
}
.titlebar { display: grid; grid-template-columns: 1fr auto 1fr; height: 31px; }
.quick {
  display: flex;
  align-items: center;
  gap: 6px;
  padding: 0 0 4px 1px;
  justify-self: start;
}
.quick > .ico { width: 18px; }
.quick > .tick:last-of-type { margin-right: -4px; }
.tick { width: 1px; height: 17px; background: #3d7484; }
h1 {
  margin: 0;
  align-self: center;
  font-size: 18px;
  line-height: 28px;
  font-weight: 400;
  color: #1b3640;
  text-shadow: 0 0 8px #fff, 0 0 12px #d8f6ff;
}
.winctl { display: flex; justify-self: end; align-items: flex-start; padding-right: 3px; }
.winctl button { width: 34px; height: 25px; }
.winctl .close { width: 58px; background: #c75050; }
.tabs { display: flex; height: 30px; color: #f0f4f4; font-size: 13px; }
.tabs > button { padding: 0 13px; }
.tabs .file {
  width: 69px;
  margin: 0 5px 0 1px;
  padding: 0;
  background: linear-gradient(#37832f, #2a7a24 60%, #4ba336);
  border: 1px solid #1d5a1c;
  border-radius: 4px 4px 0 0;
}
.tabs .on {
  width: 60px;
  margin-right: 2px;
  padding: 0;
  background: linear-gradient(#d2d2d2, #c6c6c6);
  border: 1px solid #555;
  border-bottom: 0;
  border-radius: 4px 4px 0 0;
  color: #111;
}
.docctl { display: flex; margin-left: auto; }
.docctl button { width: 26px; }
.docctl .help {
  width: 16px;
  height: 16px;
  margin: 7px 5px;
  border-radius: 50%;
  background: #3c74d0;
  font-weight: 700;
}

/* ribbon */
.ribbon {
  display: flex;
  height: 106px;
  background: linear-gradient(#c9c9c9, #b9b9b9 50%, #a4a4a4);
  border-bottom: 1px solid #3c3c3c;
}
.group {
  display: flex;
  flex-direction: column;
  justify-content: space-between;
  border-right: 1px solid #5f5f5f;
  box-shadow: 1px 0 #c8c8c8;
  flex: none;
}
.body { display: flex; }
.foot { display: flex; height: 17px; color: #333; }
.foot span { flex: 1; text-align: center; }
.launch { width: 9px; height: 9px; margin: 4px 7px 0 4px; border: 1px solid #777; border-right-color: transparent; border-bottom-color: transparent; background: linear-gradient(135deg, transparent 55%, #666 55%); }
.clipboard { width: 173px; }
.font { width: 237px; }
.align { width: 297px; }
.number { width: 164px; }
.styles { width: 567px; }
.cells { width: 159px; }
.editing { width: 202px; }

.big { flex-direction: column; justify-content: flex-start; padding-top: 9px; width: 50px; line-height: 17px; }
.big svg { margin-bottom: 10px; }
.big > .caret { margin-top: 5px; }
.clipboard .big { width: 56px; }
.stack { display: flex; flex-direction: column; gap: 3px; padding-top: 5px; }
.small { justify-content: flex-start; height: 24px; gap: 5px; padding: 0 3px; }
.small .caret { margin-left: 2px; }
.editing .stack { gap: 2px; width: 98px; padding: 4px 0 0 8px; }
.editing .small svg { margin-right: 1px; }

.rows { display: flex; flex-direction: column; gap: 10px; padding: 12px 0 0 5px; }
.row { display: flex; height: 26px; align-items: center; }
.tool { width: 27px; height: 26px; font-size: 16px; }
.it { font-style: italic; }
.un { text-decoration: underline; }
.hot { background: linear-gradient(#fddc6a, #fff08a); border: 1px solid #c99a34; border-radius: 3px; color: #5b4a1a; }
.vr { width: 1px; height: 20px; background: #666; box-shadow: 1px 0 #ccc; }
.combo { display: flex; position: relative; height: 26px; }
.combo::after {
  content: "";
  position: absolute;
  right: 5px;
  top: 12px;
  border: 3px solid transparent;
  border-top: 3px solid #555;
  border-bottom: 0;
}
.combo select {
  appearance: none;
  width: 100%;
  border: 1px solid #868686;
  background: #c6c6c6;
  padding: 0 2px;
  font: inherit;
  color: #111;
}
.face { width: 120px; }
.size { width: 55px; margin-right: 6px; }
.size select { border-left: 0; padding-left: 5px; }
.fmt { width: 155px; }
.tool.big-a { font-size: 16px; color: #333; }
.tool.small-a { font-size: 13px; color: #333; }
.big-a > svg, .small-a > svg { align-self: flex-start; margin-top: 6px; }
.font .row .caret { margin: 0 3px; }
.font .vr { margin: 0 3px; }
.fc { color: #2c4f9a; font-size: 16px; line-height: 15px; width: 20px; border-bottom: 4px solid #f00; }
.align .vr { margin: 0 3px; }
.align .vr.tall { height: 56px; margin: 14px 0 0 11px; }
.align .caret { margin: 0 2px; }
.align .rows { width: 141px; }
.align .wrapcol { width: auto; padding-left: 4px; }
.wrapcol .small { height: 26px; }
.number .caret { margin: 0 3px; }
.tool.pct { font-size: 13px; }
.tool.comma { font-size: 20px; padding-bottom: 10px; }

.cf { width: 78px; margin-left: 3px; }
.ft { width: 65px; }
.gallery { display: flex; height: 75px; margin-top: 5px; border: 1px solid #8a8a8a; background: #bcbcbc; }
.swatches { display: grid; grid-template-columns: repeat(3, 125px); grid-auto-rows: 27px; gap: 6px; padding: 6px 4px 0 4px; }
.sw { justify-content: flex-start; padding-left: 5px; font-size: 15px; height: 27px; }
.normal { background: #fff; outline: 2px solid #e0b030; }
.bad { background: #ffc7ce; color: #b00010; }
.good { background: #c6efce; color: #107010; }
.neutral { background: #ffeb9c; color: #9c6500; }
.calc { background: #f2f2f2; border: 1px solid #7f7f7f; color: #fa7d00; font-weight: 700; }
.check { background: #a5a5a5; border: 4px double #3f3f3f; padding-left: 2px; color: #fff; font-weight: 700; }
.spin { display: flex; flex-direction: column; width: 17px; border-left: 1px solid #8a8a8a; }
.spin button { flex: 1; border-bottom: 1px solid #8a8a8a; background: #c9c9c9; }
.spin .off { background: #b0b0b0; }
.cells .body { padding-left: 4px; }

/* formula bar */
.formula {
  display: flex;
  height: 32px;
  padding: 4px 0;
  background: linear-gradient(#7d7d7d, #6b6b6b);
  border-bottom: 1px solid #333;
}
.formula input { border: 0; padding: 0; font: 15px/24px "Open Sans", sans-serif; background: #fff; color: #111; }
.namebox { display: flex; align-items: center; width: 196px; padding-left: 1px; }
.namebox input { width: 182px; height: 100%; text-align: center; padding-right: 24px; }
.namebox .caret { margin-left: -18px; border-width: 5px 5px 0; }
.fx {
  display: flex;
  justify-content: space-between;
  align-items: center;
  width: 101px;
  margin-left: -14px;
  padding: 0 6px;
  border: 1px solid #444;
  border-radius: 12px 0 0 12px;
  background: #6b6b6b;
  color: #eee;
}
.fx button { font-style: italic; font-size: 19px; font-weight: 400; }
.fx sub { font-size: 13px; }
.knob { width: 9px; height: 9px; border-radius: 50%; background: #555; }
.fbar { flex: 1; }
.expand { width: 20px; border: 1px solid #333; background: #5f5f5f; }

/* grid */
.sheet { display: flex; flex: 1; min-height: 0; background: #fff; }
.gridwrap { flex: 1; min-width: 0; overflow: hidden; }
table { width: 100%; table-layout: fixed; border-collapse: separate; border-spacing: 0; }
.w34 { width: 34px; } .w92 { width: 92px; } .w125 { width: 125px; } .w112 { width: 112px; }
.w210 { width: 210px; } .w80 { width: 80px; } .w53 { width: 53px; } .w102 { width: 102px; }
.w89 { width: 89px; } .w162 { width: 162px; } .w170 { width: 170px; }
th {
  padding: 0;
  background: #6b6b6b;
  color: #e6e6e6;
  font-weight: 400;
  font-size: 15px;
  line-height: 20px;
  border: 0 solid #404040;
  border-width: 0 1px 1px 0;
}
thead th { height: 25px; border-top: 1px solid #404040; }
tbody th { vertical-align: bottom; padding-bottom: 1px; }
th.sel { background: #fddb62; color: #111; border-color: #c9a037; }
thead th.sel { background: linear-gradient(#fcd061, #ffee75); }
.corner { background: linear-gradient(135deg, #6b6b6b 50%, #474747 50%) no-repeat 14px 6px / 14px 14px #6b6b6b; }
td {
  position: relative;
  padding: 0 1px 0 3px;
  vertical-align: bottom;
  border: 0 solid #000;
  border-width: 0 1px 1px 0;
  font: 16px/22px "Liberation Sans", Arial, sans-serif;
  color: #000;
}
td:last-child { border-right: 0; border-bottom-color: #d8d8d8; }
.r1 td { height: 67px; background: #ff9; font-weight: 700; }
.r1 td:last-child { background: #fff; }
.mid td { height: 89px; }
.high td { height: 111px; }
.red, .r1 .red { color: #f00; font-weight: 700; }
.blue, .r1 .blue { color: #00f; font-weight: 700; }
.cursor::before { content: ""; position: absolute; inset: 1px; border: 1px solid #000; }
.cursor::after { content: ""; position: absolute; right: -3px; bottom: -3px; width: 5px; height: 5px; background: #000; outline: 1px solid #fff; }

.vscroll {
  display: flex;
  flex-direction: column;
  width: 24px;
  padding: 3px 6px 0 0;
  background: #6b6b6b;
  border: 1px solid #3c3c3c;
  border-width: 1px 0 0 1px;
}
.split { height: 8px; border: 1px solid #333; background: #999; }
.vscroll button { height: 20px; }
.vscroll .caret { border-left-width: 5px; border-right-width: 5px; border-top-width: 6px; }
.vscroll .caret.up { border-top-width: 0; border-bottom-width: 6px; }
.track { flex: 1; background: #5e5e5e; }
.thumb {
  height: 80%;
  display: flex;
  align-items: center;
  justify-content: center;
  border: 1px solid #333;
  background: linear-gradient(90deg, #7c7c7c, #5c5c5c);
}

/* sheet tabs */
.sheetbar { display: flex; height: 21px; background: #6b6b6b; border-top: 1px solid #333; border-bottom: 1px solid #222; }
.navs { display: flex; width: 79px; padding-left: 1px; }
.navs button { width: 19px; }
.stab, .slash, .newtab { background: linear-gradient(#6e6e6e, #8c8c8c); }
.stab { width: 53px; font-size: 14px; line-height: 19px; color: #e8e8e8; }
.stab.first { width: 65px; margin-left: -16px; padding-left: 12px; }
.stab.active {
  z-index: 1;
  width: 82px;
  padding-right: 12px;
  background: #fff;
  color: #444;
  font-weight: 700;
  clip-path: polygon(0 0, 100% 0, calc(100% - 16px) 100%, 3px 100%, 0 80%);
}
.slash { height: 19px; }
.slash.end { clip-path: polygon(0 0, 100% 0, 0 100%); }
.newtab { width: 20px; }
.hscroll { display: flex; width: 757px; margin: 0 24px 0 auto; }
.hscroll button { width: 22px; }
.split.v { width: 7px; height: auto; }
.htrack { flex: 1; padding-right: 25px; }
.hthumb { height: 100%; display: flex; align-items: center; justify-content: center; border: 1px solid #333; background: linear-gradient(#7c7c7c, #5a5a5a); }

/* status bar */
.status {
  display: flex;
  align-items: center;
  height: 26px;
  padding: 0 5px 0 8px;
  background: linear-gradient(#4b4b4b, #303030);
  color: #e6e6e6;
}
.ready { padding-right: 10px; border-right: 1px solid #222; line-height: 22px; }
.views { display: flex; gap: 2px; margin-left: auto; }
.views button { width: 22px; height: 23px; }
.zoomtxt { width: 48px; }
.round { width: 19px; height: 19px; border-radius: 50%; background: linear-gradient(#c8c8c8, #8c8c8c); }
.status input { appearance: none; width: 127px; height: 20px; margin: 0; background: linear-gradient(#999, #999) center / 100% 1px no-repeat; }
.status input::-webkit-slider-thumb {
  appearance: none;
  width: 10px;
  height: 14px;
  border: 1px solid #333;
  border-radius: 2px 2px 5px 5px;
  background: #c9c9c9;
}

/* taskbar */
.taskbar {
  display: flex;
  align-items: center;
  height: 48px;
  padding: 0 20px 0 10px;
  color: #fff;
  background:
    linear-gradient(to top right, transparent 38%, rgba(125, 205, 205, .6) 50%, transparent 62%) 48% 0 / 190px 48px no-repeat,
    linear-gradient(to top right, transparent 44%, rgba(120, 190, 215, .45) 50%, transparent 56%) 65% 0 / 60px 48px no-repeat,
    linear-gradient(90deg, #3f82a1 0, #4189ae 26%, #4088ab 42%, #3f809d 50%, #4390b2 62%, #4592b4 74%, #438aa8 88%, #3f7f99 100%);
}
.start { width: 44px; }
.task { width: 66px; height: 47px; margin-right: 4px; }
.task.ie { width: 62px; margin: 0 7px 0 17px; }
.open { background: rgba(255, 255, 255, .2); border: 1px solid rgba(255, 255, 255, .4); }
.current { margin-left: 5px; background: rgba(255, 255, 255, .38); border-color: #e4eff4; }
.tray { display: flex; align-items: center; margin-left: auto; font-size: 14px; }
.tray button { width: 30px; }
.lang { padding: 0 12px 0 14px; }
time { display: flex; flex-direction: column; align-items: center; line-height: 21px; padding: 2px 0 0 2px; }
```
